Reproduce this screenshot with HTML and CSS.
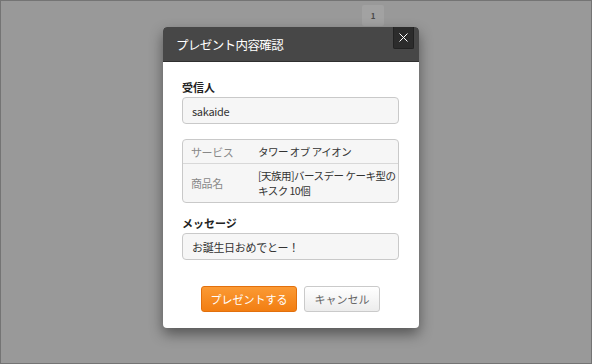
FILE: index.html
```html
<!DOCTYPE html>
<html lang="ja">
<head>
<meta charset="utf-8">
<title>プレゼント内容確認</title>
<link rel="stylesheet" href="styles.css">
</head>
<body>
<div class="screen">
  <div class="pager"><span class="page">1</span></div>

  <div class="modal">
    <div class="modal-header">
      <h1 class="modal-title">プレゼント内容確認</h1>
      <button class="close" aria-label="閉じる">
        <svg width="9" height="9" viewBox="0 0 9 9"><path d="M0.5 0.5 L8.5 8.5 M8.5 0.5 L0.5 8.5" stroke="#fff" stroke-width="1" fill="none"/></svg>
      </button>
    </div>
    <div class="modal-body">
      <div class="label">受信人</div>
      <div class="field">sakaide</div>

      <div class="info">
        <div class="info-row row-short">
          <div class="info-key">サービス</div>
          <div class="info-val">タワー オブ アイオン</div>
        </div>
        <div class="info-row row-tall">
          <div class="info-key">商品名</div>
          <div class="info-val">[天族用]バースデー ケーキ型の<br>キスク 10個</div>
        </div>
      </div>

      <div class="label label-second">メッセージ</div>
      <div class="field">お誕生日おめでとー！</div>

      <div class="actions">
        <button class="btn btn-primary">プレゼントする</button>
        <button class="btn btn-default">キャンセル</button>
      </div>
    </div>
  </div>
</div>
</body>
</html>
```

FILE: styles.css
```css
html, body {
  margin: 0;
  padding: 0;
}
body {
  font-family: "Noto Sans CJK JP", "Noto Sans", "Liberation Sans", sans-serif;
  font-size: 11px;
  color: #333;
}
.screen {
  position: relative;
  width: 592px;
  height: 364px;
  box-sizing: border-box;
  border: 1px solid #747474;
  background: #999999;
  overflow: hidden;
}
.pager {
  display: flex;
  justify-content: flex-start;
  padding: 4px 0 0 361px;
}
.page {
  display: flex;
  align-items: center;
  justify-content: center;
  width: 22px;
  height: 21px;
  border-radius: 2px;
  background: #a2a2a2;
  color: #4a4a4a;
  font-size: 8px;
  font-weight: bold;
}
.modal {
  position: absolute;
  left: 162px;
  top: 26px;
  width: 256px;
  height: 301px;
  background: #fff;
  border-radius: 4px;
  box-shadow: 0 6px 14px rgba(0, 0, 0, 0.45);
  overflow: hidden;
}
.modal-header {
  display: flex;
  align-items: center;
  height: 34px;
  background: #474747;
  border-bottom: 1px solid #2f2f2f;
}
.modal-title {
  flex: 1;
  margin: 0;
  padding-left: 13px;
  font-size: 12.5px;
  font-weight: normal;
  color: #fff;
  letter-spacing: -0.6px;
}
.close {
  align-self: flex-start;
  display: flex;
  align-items: center;
  justify-content: center;
  width: 21px;
  height: 22px;
  margin-right: 5px;
  padding: 0;
  border: 1px solid #222;
  border-top: none;
  border-radius: 0 0 2px 2px;
  background: #2c2c2c;
}
.modal-body {
  padding: 17px 20px 0 19px;
}
.label {
  font-weight: bold;
  line-height: 16px;
  margin-bottom: 2px;
  color: #222;
}
.label-second {
  margin-top: 12px;
}
.field {
  height: 27px;
  box-sizing: border-box;
  border: 1px solid #c9c9c9;
  border-radius: 4px;
  background: #f6f6f6;
  padding: 0 9px;
  display: flex;
  align-items: center;
  color: #333;
  letter-spacing: -0.3px;
}
.info {
  margin-top: 15px;
  border: 1px solid #c9c9c9;
  border-radius: 4px;
  background: #f6f6f6;
}
.info-row {
  display: flex;
  align-items: center;
}
.row-short {
  height: 23px;
  border-bottom: 1px solid #d8d8d8;
}
.row-tall {
  height: 38px;
}
.info-key {
  width: 67px;
  padding-left: 8px;
  color: #888;
  letter-spacing: -0.4px;
}
.info-val {
  flex: 1;
  line-height: 15px;
  color: #333;
  font-size: 10.5px;
  letter-spacing: -0.5px;
  white-space: nowrap;
}
.actions {
  display: flex;
  justify-content: center;
  gap: 7px;
  margin-top: 26px;
}
.btn {
  height: 26px;
  box-sizing: border-box;
  border-radius: 3px;
  font-family: inherit;
  font-size: 11px;
  padding: 0;
  cursor: pointer;
}
.btn-primary {
  width: 96px;
  color: #fff;
  border: 1px solid #e2700d;
  background: linear-gradient(#fb9a34, #f27e12);
}
.btn-default {
  width: 76px;
  color: #666;
  border: 1px solid #cacaca;
  background: linear-gradient(#ffffff, #ececec);
}
```
